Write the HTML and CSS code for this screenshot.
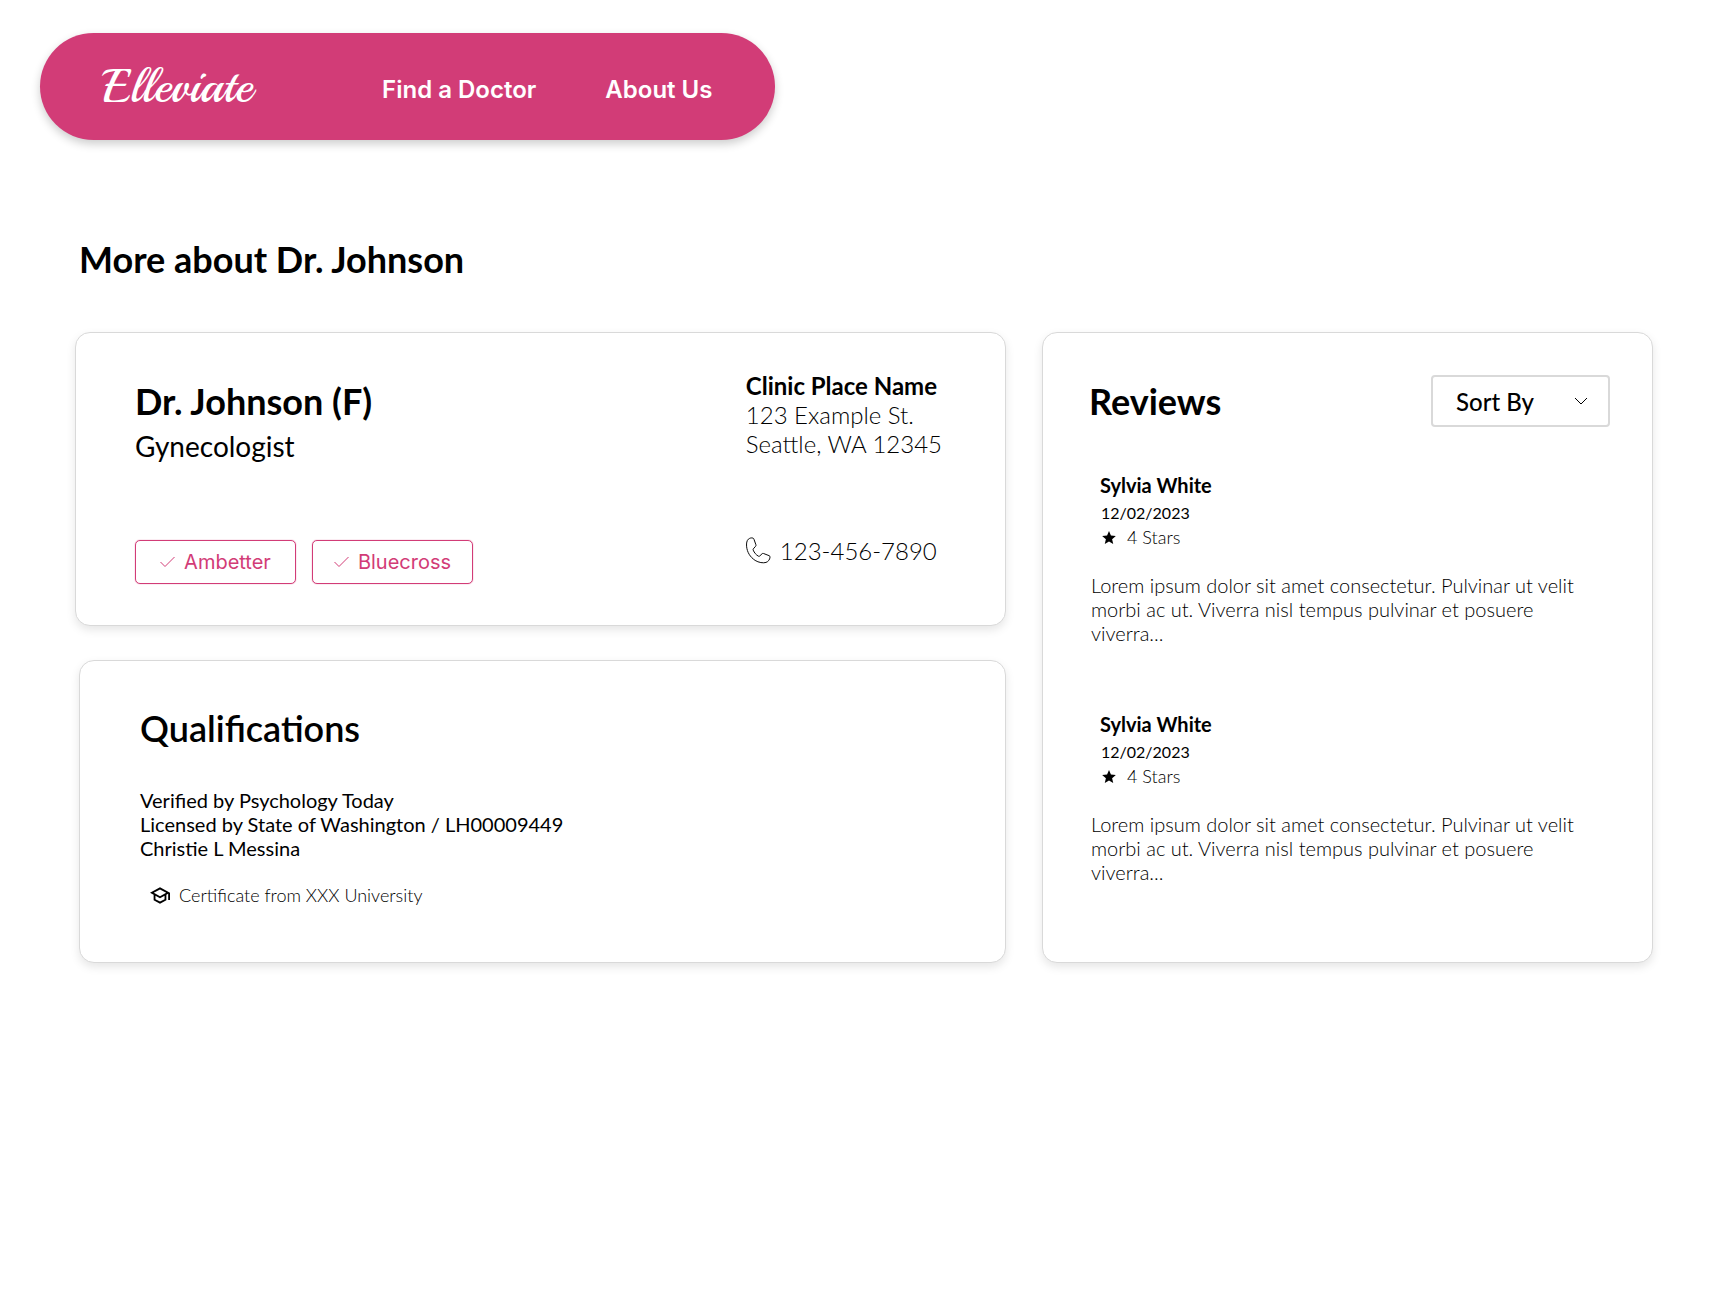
FILE: index.html
```html
<!DOCTYPE html>
<html lang="en">
<head>
  <meta charset="utf-8">
  <meta name="viewport" content="width=device-width, initial-scale=1">
  <title>Elleviate – Dr. Johnson</title>
  <link rel="stylesheet" href="styles.css">
</head>
<body>
  <header class="site-header">
    <nav class="navbar">
      <a class="logo" href="#">Elleviate</a>
      <div class="nav-links">
        <a class="nav-link" href="#">Find a Doctor</a>
        <a class="nav-link" href="#">About Us</a>
      </div>
    </nav>
  </header>

  <main class="page">
    <h1 class="title">More about Dr. Johnson</h1>

    <div class="columns">
      <div class="stack">
        <section class="card doctor">
          <div class="doctor-info">
            <h2 class="title">Dr. Johnson (F)</h2>
            <p class="specialty">Gynecologist</p>
            <ul class="chips">
              <li class="chip">
                <svg class="check" viewBox="0 0 15 12" aria-hidden="true"><path d="M.5 6 5 10.500 14.500 1"/></svg>
                Ambetter
              </li>
              <li class="chip">
                <svg class="check" viewBox="0 0 15 12" aria-hidden="true"><path d="M.5 6 5 10.500 14.500 1"/></svg>
                Bluecross
              </li>
            </ul>
          </div>
          <address class="clinic">
            <strong class="clinic-name">Clinic Place Name</strong>
            <span>123 Example St.</span>
            <span>Seattle, WA 12345</span>
            <a class="phone" href="tel:123-456-7890">
              <svg class="phone-icon" viewBox="0 0 26 28" aria-hidden="true"><path d="M2.500 2.200C4 1 5.700.6 7.200 1.100c.6.200.9.600 1.100 1.200L10.300 8c.2.700.1 1.200-.4 1.700L7.600 12.300c-.3.400-.3.900-.1 1.300 1.200 2.800 2.900 4.900 5.400 6.300.5.300 1 .2 1.400-.2l2.400-2.300c.4-.4.9-.5 1.500-.3l5.900 2.300c.7.300 1 .8.900 1.500-.3 2.600-1.800 4.700-4.200 5.500-2.800.9-7.700.2-11.300-2.100C4.300 20.800 1.100 15.800.6 9.500.4 6.300.8 3.700 2.500 2.200Z"/></svg>
              123-456-7890
            </a>
          </address>
        </section>

        <section class="card qualifications">
          <h2 class="title title-medium">Qualifications</h2>
          <p class="credentials">Verified by Psychology Today<br>Licensed by State of Washington / LH00009449<br>Christie L Messina</p>
          <p class="certificate">
            <svg class="cap" viewBox="1 3 22 18" aria-hidden="true"><path d="M12 3 1 9l4 2.180v6L12 21l7-3.820v-6l2-1.090V17h2V9L12 3zm6.820 6L12 12.720 5.180 9 12 5.280 18.820 9zM17 15.990l-5 2.730-5-2.730v-3.720L12 15l5-2.730v3.720z"/></svg>
            Certificate from XXX University
          </p>
        </section>
      </div>

      <section class="card reviews">
        <div class="reviews-head">
          <h2 class="title">Reviews</h2>
          <div class="sort">
            <select class="sort-select" aria-label="Sort reviews">
              <option>Sort By</option>
            </select>
            <svg class="chevron" viewBox="0 0 14 8" aria-hidden="true"><path d="M1 1l6 6 6-6"/></svg>
          </div>
        </div>

        <article class="review">
          <div class="review-meta">
            <h3 class="reviewer">Sylvia White</h3>
            <time class="date" datetime="2023-12-02">12/02/2023</time>
            <p class="stars">
              <svg class="star" viewBox="2 2 20 19" aria-hidden="true"><path d="M12 17.270 18.180 21l-1.640-7.030L22 9.240l-7.190-.61L12 2 9.190 8.630 2 9.240l5.460 4.730L5.820 21z"/></svg>
              4 Stars
            </p>
          </div>
          <p class="review-text">Lorem ipsum dolor sit amet consectetur. Pulvinar ut velit morbi ac ut. Viverra nisl tempus pulvinar et posuere viverra...</p>
        </article>

        <article class="review">
          <div class="review-meta">
            <h3 class="reviewer">Sylvia White</h3>
            <time class="date" datetime="2023-12-02">12/02/2023</time>
            <p class="stars">
              <svg class="star" viewBox="2 2 20 19" aria-hidden="true"><path d="M12 17.270 18.180 21l-1.640-7.030L22 9.240l-7.190-.61L12 2 9.190 8.630 2 9.240l5.460 4.730L5.820 21z"/></svg>
              4 Stars
            </p>
          </div>
          <p class="review-text">Lorem ipsum dolor sit amet consectetur. Pulvinar ut velit morbi ac ut. Viverra nisl tempus pulvinar et posuere viverra...</p>
        </article>
      </section>
    </div>
  </main>
</body>
</html>
```

FILE: styles.css
```css
:root {
  --pink: #d23c77;
  --line: #d9d9d9;
}

* {
  box-sizing: border-box;
}

body {
  margin: 0;
  background: #fff;
  color: #000;
  font-family: Lato, "Noto Sans", sans-serif;
  font-size: 20px;
  line-height: 24px;
}

h1, h2, h3, p, ul {
  margin: 0;
  padding: 0;
}

a {
  color: inherit;
  text-decoration: none;
}

svg {
  display: block;
  flex: none;
}

/* Header */
.site-header {
  display: flex;
  padding: 33px 40px 0;
}

.navbar {
  display: flex;
  align-items: center;
  gap: 130px;
  padding: 24px 63px;
  border-radius: 54px;
  background: var(--pink);
  color: #fff;
  box-shadow: 0 4px 10px rgba(0, 0, 0, 0.2);
}

.logo {
  font: 400 48px/59px Playball, "Dancing Script", "Liberation Serif", serif;
}

.nav-links {
  display: flex;
  gap: 69px;
  padding-top: 6px;
}

.nav-link {
  font: 600 24px/30px Inter, sans-serif;
}

/* Page */
.page {
  padding: 97px 75px 80px;
}

.title {
  font-size: 36px;
  line-height: 44px;
  font-weight: 700;
}

.title-medium {
  font-weight: 600;
}

.page > .title {
  padding-left: 4px;
  margin-bottom: 51px;
}

.columns {
  display: grid;
  grid-template-columns: 931fr 611fr;
  gap: 36px;
}

.stack {
  display: flex;
  flex-direction: column;
  gap: 34px;
}

.card {
  border: 1px solid var(--line);
  border-radius: 15px;
  background: #fff;
  box-shadow: 0 4px 10px rgba(0, 0, 0, 0.1);
}

/* Doctor */
.doctor {
  display: flex;
  justify-content: space-between;
  gap: 32px;
  padding: 38px 63px 41px 59px;
}

.doctor-info {
  padding-top: 8px;
}

.specialty {
  margin-top: 6px;
  font-size: 28px;
  line-height: 34px;
}

.chips {
  display: flex;
  gap: 16px;
  margin-top: 77px;
  list-style: none;
}

.chip {
  display: flex;
  align-items: center;
  justify-content: center;
  gap: 9px;
  min-width: 161px;
  height: 44px;
  border: 1px solid var(--pink);
  border-radius: 5px;
  box-shadow: 0 0 1px var(--pink);
  color: var(--pink);
  font-family: Inter, sans-serif;
}

.check {
  width: 15px;
  height: 12px;
  fill: none;
  stroke: var(--pink);
}

.clinic {
  display: flex;
  flex-direction: column;
  font-size: 24px;
  line-height: 29px;
  font-style: normal;
  font-weight: 300;
}

.clinic-name {
  font-weight: 700;
}

.phone {
  display: flex;
  align-items: center;
  gap: 9px;
  margin-top: 78px;
}

.phone-icon {
  width: 25px;
  height: 27px;
  fill: none;
  stroke: #000;
}

/* Qualifications */
.qualifications {
  flex: 1;
  margin-left: 4px;
  padding: 45px 60px;
}

.credentials {
  margin-top: 38px;
}

.certificate {
  display: flex;
  align-items: center;
  gap: 9px;
  margin-top: 24px;
  padding-left: 10px;
  font-size: 18px;
  line-height: 22px;
  font-weight: 300;
}

.cap {
  width: 20px;
  height: 17px;
}

/* Reviews */
.reviews {
  padding: 42px 42px 78px 46px;
}

.reviews-head {
  display: flex;
  align-items: center;
  justify-content: space-between;
}

.sort {
  position: relative;
}

.sort-select {
  appearance: none;
  width: 179px;
  height: 52px;
  padding: 0 48px 0 23px;
  border: 2px solid var(--line);
  border-radius: 4px;
  background: #fff;
  color: #000;
  font: 500 24px/29px Lato, sans-serif;
}

.chevron {
  position: absolute;
  top: 22px;
  right: 22px;
  width: 14px;
  height: 8px;
  fill: none;
  stroke: #000;
  pointer-events: none;
}

.review {
  margin-top: 67px;
  padding: 0 24px 0 2px;
}

.reviews-head + .review {
  margin-top: 46px;
}

.review-meta {
  padding-left: 9px;
}

.reviewer {
  font-size: 20px;
  line-height: 24px;
}

.date {
  display: block;
  margin: 6px 0 3px;
  padding-left: 1px;
  font-size: 16px;
  line-height: 20px;
}

.stars {
  display: flex;
  align-items: center;
  gap: 11px;
  padding-left: 2px;
  font-size: 18px;
  line-height: 22px;
  font-weight: 300;
}

.star {
  width: 14px;
  height: 13px;
}

.review-text {
  margin-top: 25px;
  font-weight: 300;
}

@media (max-width: 1200px) {
  .columns {
    grid-template-columns: 1fr;
  }
}
```
